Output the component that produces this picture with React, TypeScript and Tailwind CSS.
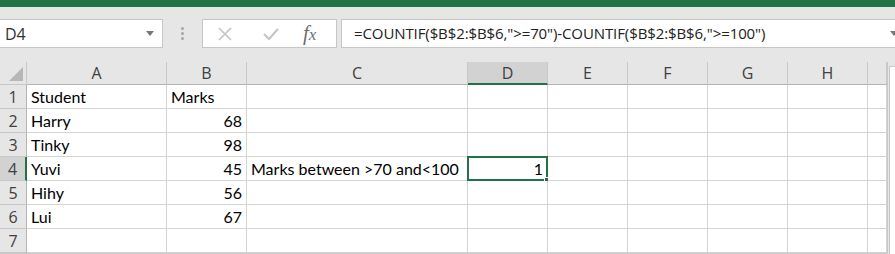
const cols = [
    { key: 'A', w: 'w-[140px]' },
    { key: 'B', w: 'w-[80px]' },
    { key: 'C', w: 'w-[221px]' },
    { key: 'D', w: 'w-[80px]' },
    { key: 'E', w: 'w-[80px]' },
    { key: 'F', w: 'w-[80px]' },
    { key: 'G', w: 'w-[80px]' },
    { key: 'H', w: 'w-[80px]' },
    { key: '', w: 'w-[19px]' },
]

const rows: Record<number, Record<string, string>> = {
    1: { A: 'Student', B: 'Marks' },
    2: { A: 'Harry', B: '68' },
    3: { A: 'Tinky', B: '98' },
    4: { A: 'Yuvi', B: '45', C: 'Marks between >70 and<100', D: '1' },
    5: { A: 'Hihy', B: '56' },
    6: { A: 'Lui', B: '67' },
    7: {},
}

const numeric = (v: string) => /^\d+$/.test(v)

export default function App() {
    return (
        <div className="w-[895px] h-[254px] overflow-hidden bg-[#e6e6e6] font-['Segoe_UI','Open_Sans',sans-serif]">
            <div className="h-[7px] bg-[#217346]" />
            {/* formula bar */}
            <div className="flex items-start h-[55px] pt-[12px]">
                <div className="flex items-center justify-between w-[163px] h-[29px] bg-white border border-[#c6c6c6] border-l-0 pl-[5px] pr-[8px]">
                    <span className="text-[16px] text-[#333]">D4</span>
                    <span className="w-0 h-0 border-l-[4px] border-r-[4px] border-t-[5px] border-l-transparent border-r-transparent border-t-[#777]" />
                </div>
                <div className="flex flex-col items-center justify-center gap-[2px] w-[39px] h-[29px]">
                    <span className="w-[3px] h-[3px] rounded-full bg-[#a6a6a6]" />
                    <span className="w-[3px] h-[3px] rounded-full bg-[#a6a6a6]" />
                    <span className="w-[3px] h-[3px] rounded-full bg-[#a6a6a6]" />
                </div>
                <div className="flex items-center w-[135px] h-[29px] bg-white border border-[#c6c6c6]">
                    <svg width="44" height="16" viewBox="0 0 44 16" className="ml-[2px]">
                        <path d="M14 2 L26 14 M26 2 L14 14" stroke="#c3c3c3" strokeWidth="1.6" fill="none" />
                    </svg>
                    <svg width="44" height="16" viewBox="0 0 44 16">
                        <path d="M15 8 L20 13 L29 3" stroke="#c3c3c3" strokeWidth="2" fill="none" />
                    </svg>
                    <span className="ml-[10px] text-[21px] italic text-[#6f6f6f] font-['Liberation_Serif',serif] leading-none">
                        f<span className="text-[17px]">x</span>
                    </span>
                </div>
                <div className="flex items-center justify-between flex-1 h-[29px] ml-[4px] bg-white border border-[#c6c6c6] border-r-0 pl-[12px]">
                    <span className="text-[15px] text-[#222] tracking-[-0.1px]">
                        =COUNTIF($B$2:$B$6,"&gt;=70")-COUNTIF($B$2:$B$6,"&gt;=100")
                    </span>
                    <span className="mr-[-3px] w-0 h-0 border-l-[4px] border-r-[4px] border-t-[5px] border-l-transparent border-r-transparent border-t-[#777]" />
                </div>
            </div>

            {/* sheet */}
            <div className="flex">
                <div className="border-r border-b border-[#c8c8c8]">
                    {/* column headers */}
                    <div className="flex h-[23px]">
                        <div className="relative w-[27px] border-r border-b border-[#c8c8c8] bg-[#e6e6e6]">
                            <span className="absolute right-[3px] bottom-[3px] w-0 h-0 [border-bottom:14px_solid_#b7b7b7] [border-left:14px_solid_transparent]" />
                        </div>
                        {cols.map((c) => (
                            <div
                                key={c.key + 'h'}
                                className={`${c.w} flex items-center justify-center text-[16px] text-[#404040] border-r border-[#c8c8c8] ${c.key === 'D' ? 'bg-[#d2d2d2] border-b-2 border-b-[#217346]' : 'bg-[#e6e6e6] border-b border-b-[#b5b5b5]'}`}
                            >
                                {c.key}
                            </div>
                        ))}
                    </div>
                    {[1, 2, 3, 4, 5, 6, 7].map((r) => (
                        <div key={r} className="flex h-[24px]">
                            <div
                                className={`w-[27px] flex items-center justify-center text-[16px] text-[#404040] border-b border-[#c8c8c8] ${r === 4 ? 'bg-[#d2d2d2] border-r-2 border-r-[#217346]' : 'bg-[#e6e6e6] border-r border-r-[#b5b5b5]'}`}
                            >
                                {r}
                            </div>
                            {cols.map((c) => {
                                const v = rows[r][c.key] ?? ''
                                const sel = r === 4 && c.key === 'D'
                                return (
                                    <div
                                        key={c.key + r}
                                        className={`${c.w} relative flex items-center bg-white border-r border-b border-[#d4d4d4] px-[4px] whitespace-nowrap overflow-visible text-[16px] text-black font-['Lato','Liberation_Sans',sans-serif] ${numeric(v) ? 'justify-end' : 'justify-start'}`}
                                    >
                                        {sel && (
                                            <span className="absolute left-[-1px] top-[-1px] right-[-1px] bottom-[-1px] border-2 border-[#217346]">
                                                <span className="absolute right-[-4px] bottom-[-4px] w-[6px] h-[6px] bg-[#217346] border border-white" />
                                            </span>
                                        )}
                                        <span className="relative">{v}</span>
                                    </div>
                                )
                            })}
                        </div>
                    ))}
                </div>
                <div className="flex-1 mt-[4px] ml-[1px] bg-white border-l border-t border-[#c8c8c8]" />
            </div>
        </div>
    )
}
